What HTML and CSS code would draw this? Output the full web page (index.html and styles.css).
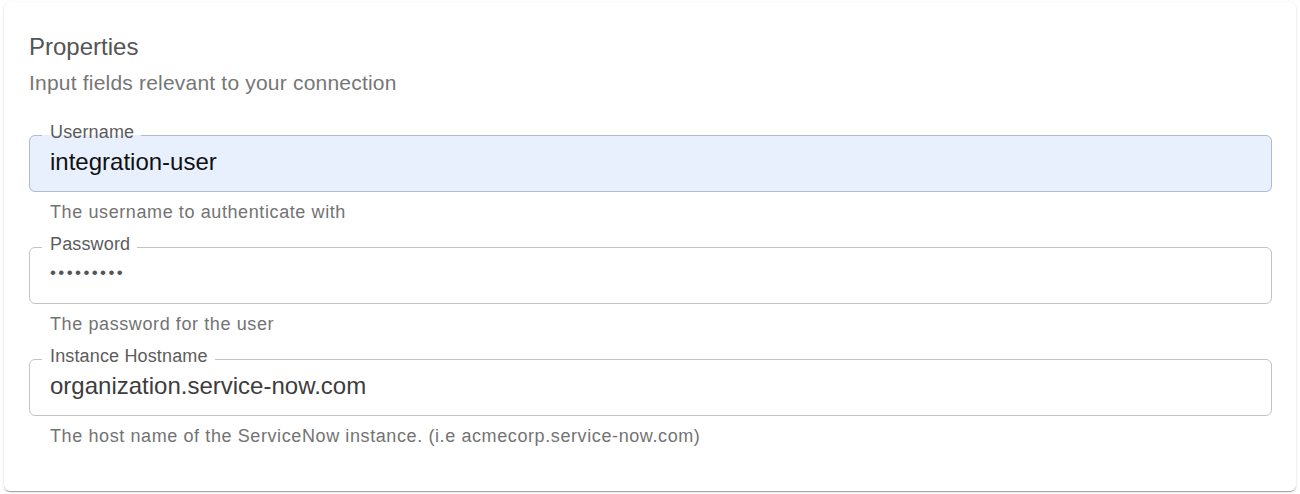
FILE: index.html
```html
<!DOCTYPE html>
<html lang="en">
<head>
    <meta charset="UTF-8">
    <meta name="viewport" content="width=device-width, initial-scale=1.0">
    <title>Connection Properties</title>
    <link rel="stylesheet" href="styles.css">
</head>
<body>
    <div class="card">
        <h3 class="card-title">Properties</h3>
        <p class="card-subtitle">Input fields relevant to your connection</p>

        <!-- Username -->
        <div class="field">
            <fieldset class="field-box autofilled">
                <legend>Username</legend>
                <input type="text" name="username" id="username" value="integration-user">
            </fieldset>
            <p class="helper">The username to authenticate with</p>
        </div>

        <!-- Password -->
        <div class="field">
            <fieldset class="field-box">
                <legend>Password</legend>
                <input type="password" class="secret" name="password" id="password" value="secretpwd">
            </fieldset>
            <p class="helper">The password for the user</p>
        </div>

        <!-- Hostname -->
        <div class="field">
            <fieldset class="field-box">
                <legend>Instance Hostname</legend>
                <input type="text" name="hostname" id="hostname" value="organization.service-now.com">
            </fieldset>
            <p class="helper">The host name of the ServiceNow instance. (i.e acmecorp.service-now.com)</p>
        </div>
    </div>
</body>
</html>
```

FILE: styles.css
```css
body {
    margin: 0;
    background-color: #ffffff;
    font-family: "Liberation Sans", Arial, Helvetica, sans-serif;
}

/* Card container */
.card {
    margin: 2px 4px;
    padding: 27px 24px 40px 25px;
    background-color: #ffffff;
    border-radius: 6px;
    box-shadow: 0 2px 1px -1px rgba(0, 0, 0, 0.2), 0 1px 1px 0 rgba(0, 0, 0, 0.14), 0 1px 3px 0 rgba(0, 0, 0, 0.12);
}

.card-title {
    margin: 0;
    font-size: 24px;
    line-height: 36px;
    font-weight: normal;
    color: #555555;
}

.card-subtitle {
    margin: 3px 0 0;
    font-size: 21px;
    line-height: 30px;
    letter-spacing: 0.2px;
    color: #767676;
}

/* Outlined fields */
.field {
    margin-top: 8px;
}

.card-subtitle + .field {
    margin-top: 25px;
}

.field-box {
    margin: 0;
    padding: 0 12px 14px;
    min-width: 0;
    border: 1px solid #c4c4c4;
    border-radius: 6px;
}

.field-box legend {
    padding: 0 7px 6px 8px;
    font-size: 18px;
    line-height: 18px;
    letter-spacing: 0.15px;
    color: #5c5c5c;
}

.field-box input {
    display: block;
    box-sizing: border-box;
    width: 100%;
    height: 30px;
    padding: 0 8px;
    border: none;
    outline: none;
    background: transparent;
    font-family: inherit;
    font-size: 24px;
    color: #3d3d3d;
}

.field-box input.secret {
    font-size: 17px;
    letter-spacing: 2.4px;
    padding-bottom: 3px;
    color: #555555;
}

.autofilled {
    background-color: #e8f0fe;
    border-color: #b3bbc7;
}

.autofilled input {
    color: #111111;
}

.helper {
    margin: 5px 0 0 21px;
    font-size: 18px;
    line-height: 30px;
    letter-spacing: 0.6px;
    color: #737373;
}
```
